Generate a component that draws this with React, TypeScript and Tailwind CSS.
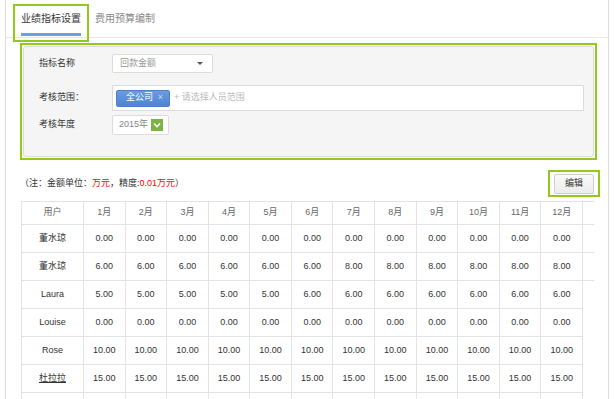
import React from 'react'

type Row = {
    name: string
    values: string[]
    link?: boolean
    wide?: boolean
}

const months = ['1月', '2月', '3月', '4月', '5月', '6月', '7月', '8月', '9月', '10月', '11月', '12月']

const rows: Row[] = [
    { name: '董水琼', values: Array(12).fill('0.00'), wide: true },
    { name: '董水琼', values: [...Array(6).fill('6.00'), ...Array(6).fill('8.00')], wide: true },
    { name: 'Laura', values: [...Array(5).fill('5.00'), ...Array(7).fill('6.00')] },
    { name: 'Louise', values: Array(12).fill('0.00') },
    { name: 'Rose', values: Array(12).fill('10.00') },
    { name: '杜拉拉', values: Array(12).fill('15.00'), link: true },
    { name: '', values: Array(12).fill('') },
]

const Tabs = () => (
    <div className="flex h-[38px] border-b border-[#e6e6e6] pl-[15px]">
        <div className="relative flex flex-col">
            <span className="pt-[12px] text-[10px] leading-[14px] text-[#333]">业绩指标设置</span>
            <span className="mt-[7px] h-[3px] bg-[#6f9fe0]" />
            <span className="absolute left-[-8px] top-[4px] h-[38px] w-[76px] border-2 border-[#92c91b]" />
        </div>
        <span className="ml-[14px] pt-[12px] text-[10px] leading-[14px] text-[#888]">费用预算编制</span>
    </div>
)

const FilterPanel = () => (
    <div className="ml-[14px] w-[577px] border-2 border-[#92c91b] p-[1px]">
        <div className="flex h-[111px] flex-col rounded-[3px] border border-[#dcdcdc] bg-[#f5f5f5] pl-[15px] pt-[7px]">
            <div className="flex items-center">
                <span className="w-[73px] text-[9px] text-[#333]">指标名称</span>
                <div className="flex h-[19px] w-[101px] items-center justify-between rounded-[2px] border border-[#dcdcdc] bg-white pl-[7px] pr-[9px]">
                    <span className="text-[9px] text-[#999]">回款金额</span>
                    <span className="h-0 w-0 border-x-[3px] border-t-[3px] border-x-transparent border-t-[#555]" />
                </div>
            </div>
            <div className="mt-[12px] flex items-center">
                <span className="w-[73px] text-[9px] text-[#333]">考核范围：</span>
                <div className="flex h-[26px] w-[472px] items-center border border-[#dcdcdc] bg-white pl-[3px]">
                    <span className="flex h-[17px] w-[54px] items-center justify-between rounded-[2px] border border-[#4f80c9] bg-gradient-to-b from-[#6b9be0] to-[#4f84d1] pl-[9px] pr-[6px] text-[9px] text-white">
                        <span>全公司</span>
                        <span className="text-[#cfdcf3]">×</span>
                    </span>
                    <span className="ml-[4px] text-[9px] text-[#bbb]">+ 请选择人员范围</span>
                </div>
            </div>
            <div className="mt-[4px] flex items-center">
                <span className="w-[73px] text-[9px] text-[#333]">考核年度</span>
                <div className="flex h-[20px] w-[57px] items-center rounded-[2px] border border-[#dcdcdc] bg-white pl-[6px]">
                    <span className="text-[9px] text-[#888]">2015年</span>
                    <span className="ml-[3px] flex h-[12px] w-[12px] items-center justify-center bg-[#7db343]">
                        <svg width="8" height="6" viewBox="0 0 8 6">
                            <path d="M1 1.5 L4 4.5 L7 1.5" stroke="white" strokeWidth="1.6" fill="none" />
                        </svg>
                    </span>
                </div>
            </div>
        </div>
    </div>
)

const NoteBar = () => (
    <div className="ml-[14px] mt-[10px] flex w-[580px] items-center justify-between">
        <span className="text-[9px] text-[#333]">
            （注：金额单位：<span className="text-[#f00]">万元</span>，精度:<span className="text-[#f00]">0.01万元</span>）
        </span>
        <div className="border-2 border-[#92c91b] px-[4px] pb-[1px] pt-[2px]">
            <button className="flex h-[20px] w-[40px] items-center justify-center rounded-[2px] border border-[#d0d0d0] bg-gradient-to-b from-[#fafafa] to-[#ececec] text-[9px] text-[#333]">
                编辑
            </button>
        </div>
    </div>
)

const DataTable = () => (
    <table className="ml-[15px] mt-[4px] w-[573px] table-fixed border-collapse text-center text-[9px]">
        <colgroup>
            <col className="w-[62px]" />
            {months.map((m) => (
                <col key={m} className="w-[41.58px]" />
            ))}
            <col className="w-[12px]" />
        </colgroup>
        <thead>
            <tr className="h-[23px] border-y border-[#e3e3e3]">
                <th className="border border-[#e3e3e3] font-normal text-[#666]">用户</th>
                {months.map((m) => (
                    <th key={m} className="border border-[#e3e3e3] font-normal text-[#666]">
                        {m}
                    </th>
                ))}
                <th className="border-y border-[#e3e3e3]" />
            </tr>
        </thead>
        <tbody>
            {rows.map((row, i) => (
                <tr key={i} className="h-[28px]">
                    <td className="border border-[#e3e3e3] text-[#333]">
                        <span className={row.link ? 'underline' : ''}>{row.name}</span>
                    </td>
                    {row.values.map((v, j) => (
                        <td key={j} className="border border-[#e3e3e3] text-[#333]">
                            {v}
                        </td>
                    ))}
                    <td className={row.wide ? 'border-b border-[#e3e3e3]' : ''} />
                </tr>
            ))}
        </tbody>
    </table>
)

export default function App() {
    return (
        <div className="h-[399px] w-[615px] overflow-hidden bg-white font-['Liberation_Sans','Noto_Sans_CJK_SC',sans-serif]">
            <div className="ml-[5px] h-[399px] w-[604px] border-x border-[#dedede]">
                <Tabs />
                <div className="pt-[5px]">
                    <FilterPanel />
                    <NoteBar />
                    <DataTable />
                </div>
            </div>
        </div>
    )
}
